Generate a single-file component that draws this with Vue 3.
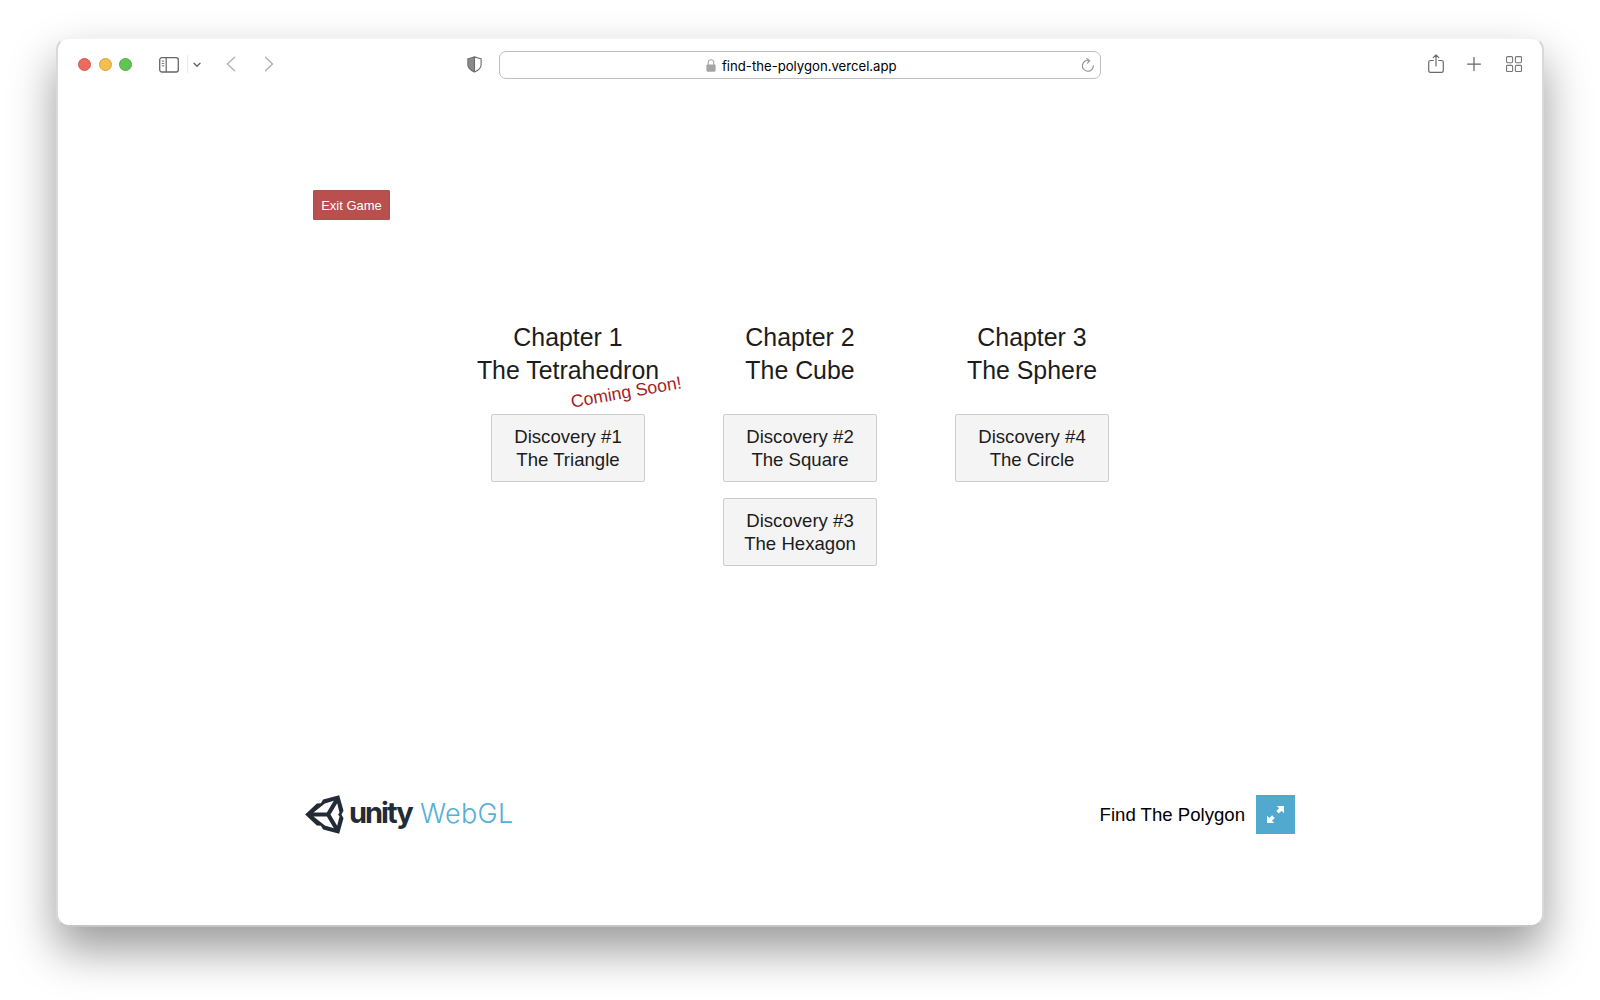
<script setup>
const chapters = [
  { title: 'Chapter 1', name: 'The Tetrahedron', soon: true, items: [['Discovery #1', 'The Triangle']] },
  { title: 'Chapter 2', name: 'The Cube', items: [['Discovery #2', 'The Square'], ['Discovery #3', 'The Hexagon']] },
  { title: 'Chapter 3', name: 'The Sphere', items: [['Discovery #4', 'The Circle']] },
]
</script>

<template>
  <div class="desktop">
    <div class="window">
      <header class="toolbar">
        <div class="left">
          <div class="lights"><i class="red"></i><i class="yellow"></i><i class="green"></i></div>
          <svg class="sidebar" width="20" height="16" viewBox="0 0 20 16" fill="none" stroke="#666">
            <rect x=".7" y=".7" width="18.6" height="14.3" rx="2.2" stroke-width="1.3" />
            <path d="M7.2 .7V15" stroke-width="1.2" />
            <path d="M2.7 4h2.6M2.7 6.4h2.6M2.7 8.8h2.6" stroke-width=".9" />
          </svg>
          <span class="divider"></span>
          <svg class="chev" width="8" height="6" viewBox="0 0 8 6" fill="none" stroke="#666" stroke-width="1.4" stroke-linecap="round" stroke-linejoin="round"><path d="M1 1.2L4 4.2L7 1.2" /></svg>
          <svg class="back" width="10" height="16" viewBox="0 0 10 16" fill="none" stroke="#b0b0b0" stroke-width="1.3" stroke-linecap="round" stroke-linejoin="round"><path d="M8.5 1.3L1.5 8L8.5 14.7" /></svg>
          <svg class="forward" width="10" height="16" viewBox="0 0 10 16" fill="none" stroke="#b0b0b0" stroke-width="1.3" stroke-linecap="round" stroke-linejoin="round"><path d="M1.5 1.3L8.5 8L1.5 14.7" /></svg>
        </div>
        <svg class="shield" width="15" height="17" viewBox="0 0 15 17">
          <path d="M7.5 .8C5.7 1.9 3.4 2.3 .9 2.7V9c0 3.2 2.6 5.2 6.6 7.1z" fill="#8a8a8a" />
          <path d="M7.5 .8C5.7 1.9 3.4 2.3 .9 2.7V9c0 3.2 2.6 5.2 6.6 7.1 4-1.9 6.6-3.9 6.6-7.1V2.7C11.6 2.3 9.3 1.9 7.5 .8zV16" fill="none" stroke="#6c6c6c" stroke-width="1.1" />
        </svg>
        <div class="address">
          <svg class="lock" width="10" height="13" viewBox="0 0 10 13"><rect x=".4" y="5.5" width="9.2" height="7.2" rx="1.1" fill="#a5a5a5" /><path d="M2.2 6V3.8a2.8 3 0 0 1 5.6 0V6" fill="none" stroke="#a5a5a5" stroke-width="1.1" /></svg>
          <span class="url">find-the-polygon.vercel.app</span>
          <svg class="reload" width="14" height="14" viewBox="0 0 14 14" fill="none" stroke="#8c8c8c" stroke-width="1.1" stroke-linecap="round" stroke-linejoin="round"><path d="M12.4 7.7A5.5 5.5 0 1 1 8.3 2.5M5.9 .6L8.5 2.7L6.6 5.2" /></svg>
        </div>
        <div class="right">
          <svg class="share" width="16" height="19" viewBox="0 0 16 19" fill="none" stroke="#6a6a6a" stroke-width="1.2" stroke-linecap="round" stroke-linejoin="round"><path d="M5.3 6.5H2.6a1.9 1.9 0 0 0-1.9 1.9v8a1.9 1.9 0 0 0 1.9 1.9h10.8a1.9 1.9 0 0 0 1.9-1.9v-8a1.9 1.9 0 0 0-1.9-1.9h-2.7M8 12V1M5.2 3.7L8 .9L10.8 3.7" /></svg>
          <svg class="plus" width="14" height="14" viewBox="0 0 14 14" stroke="#666" stroke-width="1.25" stroke-linecap="round"><path d="M7 .6V13.4M.6 7H13.4" /></svg>
          <svg class="grid" width="16" height="16" viewBox="0 0 16 16" fill="none" stroke="#777" stroke-width="1.1"><rect x=".5" y=".6" width="6.1" height="6.1" rx="1.1" /><rect x="9.4" y=".6" width="6.1" height="6.1" rx="1.1" /><rect x=".5" y="9.4" width="6.1" height="6.1" rx="1.1" /><rect x="9.4" y="9.4" width="6.1" height="6.1" rx="1.1" /></svg>
        </div>
      </header>
      <main class="game">
        <button class="exit">Exit Game</button>
        <div class="chapters">
          <section v-for="c in chapters" :key="c.title" class="chapter">
            <h2>{{ c.title }}<br />{{ c.name }}<span v-if="c.soon" class="soon">Coming Soon!</span></h2>
            <button v-for="d in c.items" :key="d[0]" class="level">{{ d[0] }}<br />{{ d[1] }}</button>
          </section>
        </div>
        <footer class="footer">
          <svg class="mark" width="39" height="39" viewBox="29.5 44.5 117 117">
            <path fill="#222c37" fill-rule="evenodd" d="M30 103L65 70L77 69L84 58L132 45L145 92L139 103L145 114L132 161L84 148L77 137L65 136ZM55 97H95L116 62L89 70ZM55 109L89 136L116 144L95 109ZM106 103L126 137L133 109L129 103L133 97L126 69Z" />
          </svg>
          <span class="unity">unity</span>
          <span class="webgl">WebGL</span>
          <span class="title">Find The Polygon</span>
          <span class="full">
            <svg width="39" height="39" viewBox="0 0 39 39" fill="#fff"><path d="M20.8 11H28V18.2L25.6 15.8L22.8 18.6L20.3 16.1L23.1 13.3ZM18.3 28H11V20.8L13.3 23.1L16.1 20.3L18.7 22.9L15.9 25.7Z" /></svg>
          </span>
        </footer>
      </main>
    </div>
  </div>
</template>

<style>
body { margin: 0; background: #fff; }
</style>

<style scoped>
.desktop { box-sizing: border-box; width: 1600px; height: 1000px; padding: 37px 56px 0; overflow: hidden; background: #fff; font-family: "Liberation Sans", Arial, sans-serif; }
.window { box-sizing: border-box; width: 1488px; height: 890px; border: 2px solid; border-color: #f3f3f3 #d8d8d8 #c6c6c6; background: #fff; border-radius: 13px; box-shadow: 0 23px 46px rgba(0, 0, 0, .4); }
svg { display: block; flex: none; }
.toolbar { height: 50px; display: flex; align-items: center; }
.left { display: flex; align-items: center; width: 409px; }
.lights { display: flex; gap: 7.7px; margin: 1px 0 0 20px; }
.lights i { box-sizing: border-box; width: 13px; height: 13px; border-radius: 50%; border: 1px solid; }
.lights .red { background: #ed6a5e; border-color: #cf5b52; }
.lights .yellow { background: #f4bf4f; border-color: #d3a244; }
.lights .green { background: #61c554; border-color: #54a84a; }
.sidebar { margin: 1px 0 0 26.6px; }
.divider { width: 1px; height: 18px; margin-left: 8px; background: #e9e9e9; }
.chev { margin: 1px 0 0 5px; }
.back { margin-left: 25px; }
.forward { margin-left: 28px; }
.address { box-sizing: border-box; width: 602px; height: 28px; margin: 1px 0 0 17px; border: 1px solid #bebebe; border-radius: 7px; display: flex; align-items: center; padding: 0 5px 0 206px; }
.lock { margin-top: 1px; }
.url { margin: 2px 0 0 6px; font: 13.15px/20px Inter, sans-serif; color: #000; white-space: nowrap; }
.reload { margin-left: auto; }
.right { display: flex; align-items: center; margin-left: 327px; }
.share { margin-top: -1px; }
.plus { margin-left: 23px; }
.grid { margin-left: 25px; }
.game { display: flex; flex-direction: column; width: 990px; margin: 0 auto; padding-top: 101px; }
button { font-family: inherit; margin: 0; padding: 0; box-sizing: border-box; }
.exit { width: 77px; height: 30px; margin-left: 8px; border: 1px solid #a9524e; background: #b9504d; color: #fff; font-size: 13px; border-radius: 1px; white-space: nowrap; }
.chapters { display: flex; justify-content: center; height: 465px; margin-top: 101px; }
.chapter { width: 232px; display: flex; flex-direction: column; align-items: center; }
h2 { position: relative; margin: 0 0 27px; font-weight: 400; font-size: 24.9px; line-height: 33.2px; text-align: center; color: #1c1c1c; white-space: nowrap; }
.soon { position: absolute; left: 93px; top: 59px; font-size: 17.7px; line-height: 24px; color: #a81c1c; transform: rotate(-10deg); }
.level { width: 154px; height: 68px; margin-bottom: 16px; padding-bottom: 1px; border: 1px solid #ccc; border-radius: 2px; background: #f4f4f4; color: #1c1c1c; font-size: 18.6px; line-height: 23px; }
.footer { display: flex; align-items: center; height: 39px; margin-top: 9px; }
.unity { width: 71px; margin: -3px 0 0 5px; font: 700 29px/38px Inter, sans-serif; letter-spacing: -2px; color: #222c37; }
.webgl { margin-top: -1px; font: 300 27px/38px Inter, sans-serif; letter-spacing: .3px; color: #55b0d4; }
.title { margin-left: auto; font-size: 18.6px; color: #000; white-space: nowrap; }
.full { width: 39px; height: 39px; margin-left: 11px; background: #52a9cf; }
</style>
